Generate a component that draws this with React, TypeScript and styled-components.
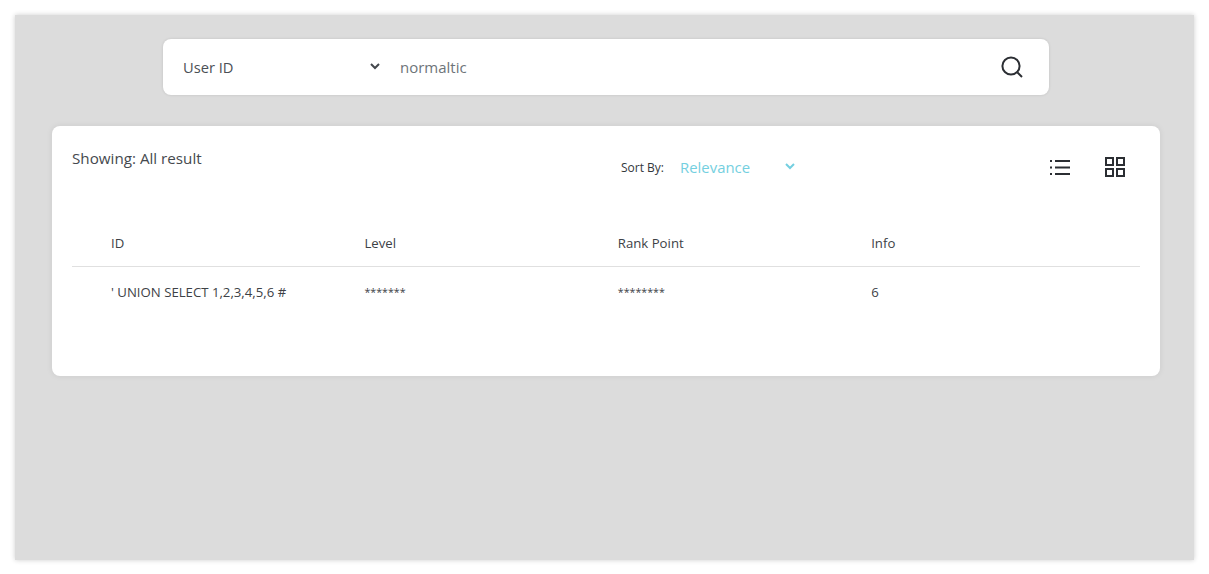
import styled, { createGlobalStyle } from 'styled-components';

const Global = createGlobalStyle`
  html, body { margin: 0; padding: 0; background: #fff; }
  body { font-family: "Open Sans", "Noto Sans", sans-serif; color: #333; }
`;

const Page = styled.div`
  box-sizing: border-box;
  width: 1209px;
  height: 574px;
  padding: 15px 15px 14px 15px;
`;

const Frame = styled.div`
  box-sizing: border-box;
  width: 1179px;
  height: 545px;
  background: #dcdcdc;
  box-shadow: 0 0 5px rgba(0, 0, 0, 0.2);
  padding: 24px 34px 0 37px;
  display: flex;
  flex-direction: column;
  align-items: stretch;
  gap: 31px;
`;

const SearchBar = styled.div`
  align-self: flex-start;
  margin-left: 111px;
  box-sizing: border-box;
  width: 886px;
  height: 56px;
  background: #fff;
  border-radius: 8px;
  box-shadow: 0 0 3px rgba(0, 0, 0, 0.12);
  display: flex;
  align-items: center;
  padding: 0 25px 0 20px;
`;

const UserSelect = styled.div`
  width: 198px;
  margin-right: 19px;
  display: flex;
  align-items: center;
  justify-content: space-between;
  font-size: 14.7px;
  color: #4a4f55;
`;

const SearchInput = styled.div`
  flex: 1;
  font-size: 15px;
  color: #6e7479;
`;

const Card = styled.div`
  box-sizing: border-box;
  height: 250px;
  background: #fff;
  border-radius: 8px;
  box-shadow: 0 0 6px rgba(0, 0, 0, 0.08);
  padding: 22px 20px 0 20px;
`;

const Toolbar = styled.div`
  display: flex;
  align-items: flex-start;
  height: 74px;
`;

const Showing = styled.div`
  width: 549px;
  font-size: 15.2px;
  line-height: 20px;
  color: #45494e;
`;

const SortBy = styled.div`
  width: 175px;
  margin-top: 9px;
  display: flex;
  align-items: center;
  justify-content: space-between;
`;

const SortLabel = styled.span`
  font-size: 12px;
  color: #33373c;
`;

const SortValue = styled.span`
  flex: 1;
  margin-left: 16px;
  font-size: 14.9px;
  color: #74cfe0;
`;

const ViewButtons = styled.div`
  margin-left: auto;
  margin-right: 15px;
  margin-top: 9px;
  display: flex;
  align-items: center;
  gap: 35px;
`;

const Row = styled.div<{ $head?: boolean }>`
  display: grid;
  grid-template-columns: repeat(4, 253.4px);
  padding-left: 39px;
  height: ${p => (p.$head ? '32px' : 'auto')};
  padding-top: ${p => (p.$head ? '12px' : '16px')};
  border-bottom: ${p => (p.$head ? '1px solid #e0e0e0' : 'none')};
`;

const Cell = styled.div<{ $mask?: boolean }>`
  font-size: ${p => (p.$mask ? '10.7px' : '13.2px')};
  line-height: 18px;
  color: #3d4146;
`;

const App = () => (
  <>
    <Global />
    <Page>
      <Frame>
        <SearchBar>
          <UserSelect>
            <span>User ID</span>
            <svg width="12" height="12" viewBox="0 0 12 12" fill="none">
              <path d="M2 3 6 7 10 3" stroke="#43474c" strokeWidth="2" />
            </svg>
          </UserSelect>
          <SearchInput>normaltic</SearchInput>
          <svg width="24" height="24" viewBox="0 0 24 24" fill="none">
            <circle cx="11" cy="11" r="8.6" stroke="#2b2e33" strokeWidth="2" />
            <path d="M17.5 17.5 22 22" stroke="#2b2e33" strokeWidth="2" />
          </svg>
        </SearchBar>
        <Card>
          <Toolbar>
            <Showing>Showing: All result</Showing>
            <SortBy>
              <SortLabel>Sort By:</SortLabel>
              <SortValue>Relevance</SortValue>
              <svg width="12" height="12" viewBox="0 0 12 12" fill="none">
                <path d="M2 3 6 7 10 3" stroke="#74cfe0" strokeWidth="2" />
              </svg>
            </SortBy>
            <ViewButtons>
              <svg width="20" height="15" viewBox="0 0 20 15" fill="#2b2e33">
                <rect x="0" y="0" width="2" height="2" />
                <rect x="0" y="6.5" width="2" height="2" />
                <rect x="0" y="13" width="2" height="2" />
                <rect x="5" y="0" width="15" height="2" />
                <rect x="5" y="6.5" width="15" height="2" />
                <rect x="5" y="13" width="15" height="2" />
              </svg>
              <svg width="20" height="20" viewBox="0 0 20 20" fill="none" stroke="#2b2e33" strokeWidth="2">
                <rect x="1" y="1" width="7" height="7" />
                <rect x="12" y="1" width="7" height="7" />
                <rect x="1" y="12" width="7" height="7" />
                <rect x="12" y="12" width="7" height="7" />
              </svg>
            </ViewButtons>
          </Toolbar>
          <Row $head>
            <Cell>ID</Cell>
            <Cell>Level</Cell>
            <Cell>Rank Point</Cell>
            <Cell>Info</Cell>
          </Row>
          <Row>
            <Cell>' UNION SELECT 1,2,3,4,5,6 #</Cell>
            <Cell $mask>*******</Cell>
            <Cell $mask>********</Cell>
            <Cell>6</Cell>
          </Row>
        </Card>
      </Frame>
    </Page>
  </>
);

export default App;
